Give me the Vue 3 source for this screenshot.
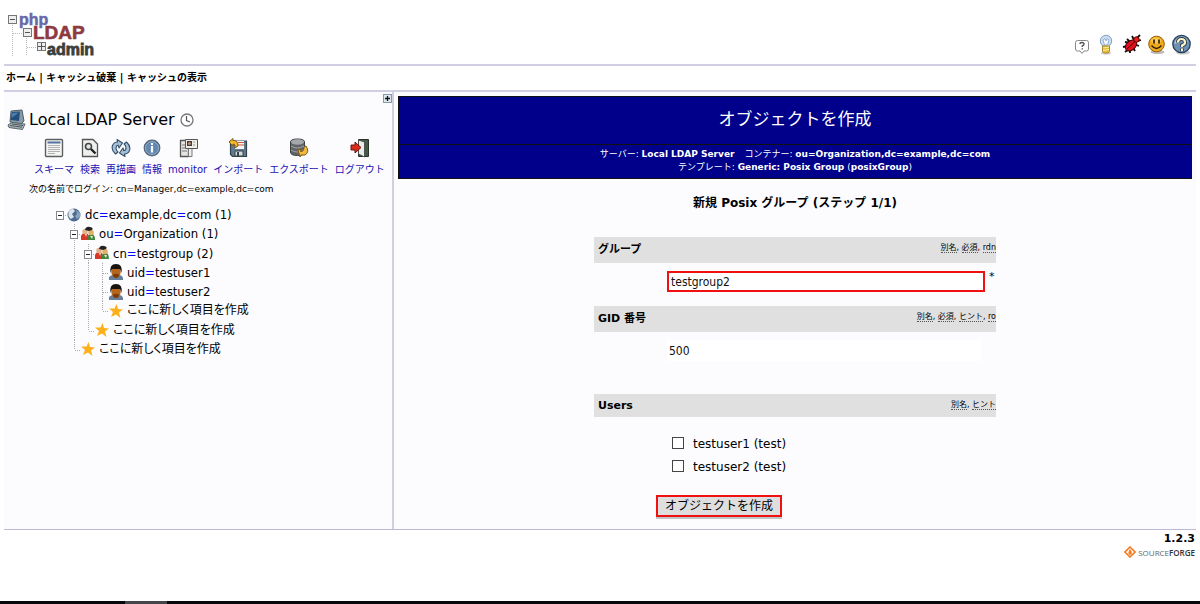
<script setup>
import { ref } from 'vue'

const group = ref('testgroup2')
const gid = ref('500')
const menu = ['ホーム', 'キャッシュ破棄', 'キャッシュの表示']
const tools = [
  { id: 'schema', label: 'スキーマ' },
  { id: 'search', label: '検索' },
  { id: 'refresh', label: '再描画' },
  { id: 'info', label: '情報' },
  { id: 'monitor', label: 'monitor' },
  { id: 'import', label: 'インポート' },
  { id: 'export', label: 'エクスポート' },
  { id: 'logout', label: 'ログアウト' },
]
const tree = [
  { cells: ['root'], icon: 'globe', parts: ['dc', '=', 'example', ',', 'dc', '=', 'com (1)'] },
  { cells: ['none', 'open'], icon: 'people', parts: ['ou', '=', 'Organization (1)'] },
  { cells: ['none', 'line', 'open'], icon: 'people', parts: ['cn', '=', 'testgroup (2)'] },
  { cells: ['none', 'line', 'line', 'branch'], icon: 'user', parts: ['uid', '=', 'testuser1'] },
  { cells: ['none', 'line', 'line', 'branch'], icon: 'user', parts: ['uid', '=', 'testuser2'] },
  { cells: ['none', 'line', 'line', 'corner'], icon: 'star', parts: ['ここに新しく項目を作成'] },
  { cells: ['none', 'line', 'corner'], icon: 'star', parts: ['ここに新しく項目を作成'] },
  { cells: ['none', 'corner'], icon: 'star', parts: ['ここに新しく項目を作成'] },
]
const users = ref([
  { name: 'testuser1', on: false },
  { name: 'testuser2', on: false },
])
const partClass = (p) => (p === '=' ? 'eq' : p === ',' ? 'comma' : '')
</script>

<template>
  <div class="page">
    <header class="top">
      <a href="#" class="logo" aria-label="phpLDAPadmin">
        <svg width="94" height="52" viewBox="0 0 94 52">
          <g stroke="#bbb" stroke-dasharray="1 1" fill="none">
            <path d="M6.500 14V47M7 24.500H16M20.500 27V47M21 38.500H30" />
          </g>
          <g fill="#eee" stroke="#777">
            <rect x="2.500" y="6.500" width="8" height="8" />
            <rect x="17.500" y="19.500" width="8" height="8" />
            <rect x="31.500" y="33.500" width="8" height="8" />
          </g>
          <path d="M4 10.500H9M19 23.500H24M32 37.500H39M35.500 34V41" stroke="#555" />
          <g font-family="Liberation Sans, sans-serif" font-weight="bold">
            <text x="13" y="16" font-size="16" fill="#6668a8" stroke="#6668a8" stroke-width=".5">php</text>
            <text x="27" y="30" font-size="19" fill="#8e3a3f" stroke="#8e3a3f" stroke-width=".6">LDAP</text>
            <text x="41" y="46" font-size="16" fill="#3c3f3c" stroke="#3c3f3c" stroke-width=".8">admin</text>
          </g>
        </svg>
      </a>
      <nav class="links" aria-label="リンク">
        <a href="#" aria-label="hint">
          <svg width="20" height="22" viewBox="0 0 20 22">
            <path d="M5.500 7.500H14.500Q16.500 7.500 16.500 9.500V16Q16.500 18 14.500 18H12L10 20.500L8 18H5.500Q3.500 18 3.500 16V9.500Q3.500 7.500 5.500 7.500Z" fill="#fff" stroke="#888" />
            <path d="M8 11Q8 9.500 10 9.500T12 11.300Q12 12.300 10.300 13V14M10.300 15.200V16.500" fill="none" stroke="#555" stroke-width="1.400" />
          </svg>
        </a>
        <a href="#" aria-label="request">
          <svg width="20" height="22" viewBox="0 0 20 22">
            <ellipse cx="9" cy="20" rx="5" ry="1.500" fill="#ccc" />
            <circle cx="9" cy="8" r="5.700" fill="#cfe0f5" stroke="#7f9fc7" />
            <path d="M6 7L8 5.500L9 8L10 5.500L12 7L10.500 12H7.500Z" fill="#f8fbff" stroke="#93afd0" />
            <path d="M5.500 13H12.500V18.500L11 20H7L5.500 18.500Z" fill="#e7bd3b" stroke="#a9862c" />
            <path d="M6 15L12 14M6 17.500L12 16.500" stroke="#fff0a0" />
          </svg>
        </a>
        <a href="#" aria-label="bug">
          <svg width="20" height="22" viewBox="0 0 20 22">
            <path d="M3 9L8 10M1 14L6 13M3 19L7 16M8 20V15M13 18L10 13M17 13L12 11M10 3L12 7M15 5L18 2M16 8L19 7M5 6L8 9" stroke="#111" stroke-width="1.800" fill="none" />
            <ellipse cx="9" cy="12.500" rx="6.500" ry="4.500" transform="rotate(-42 9 12.500)" fill="#e00f1e" stroke="#400" />
            <circle cx="14.500" cy="6.500" r="2.700" fill="#e22" stroke="#500" />
            <path d="M5 16L13 8.500" stroke="#500" />
          </svg>
        </a>
        <a href="#" aria-label="donate">
          <svg width="20" height="22" viewBox="0 0 20 22">
            <ellipse cx="10.500" cy="19" rx="7" ry="2" fill="#bbb" />
            <circle cx="9.500" cy="11" r="7.800" fill="#eea91c" stroke="#9a5e08" />
            <ellipse cx="9" cy="7.500" rx="5" ry="3" fill="#f9ca50" />
            <path d="M7 6.500V10.500M12 6.500V10.500" stroke="#312008" stroke-width="1.700" />
            <path d="M4.500 12.500Q9.500 18.500 14.500 12.500" fill="none" stroke="#312008" stroke-width="1.300" />
          </svg>
        </a>
        <a href="#" aria-label="help">
          <svg width="20" height="22" viewBox="0 0 20 22">
            <ellipse cx="11" cy="19.500" rx="7" ry="2" fill="#ccc" />
            <circle cx="9.500" cy="11" r="8.700" fill="#6d90b2" stroke="#233e58" stroke-width="1.300" />
            <path d="M2.500 10Q4 4 10 3.500Q15 4 16 9Q10 7 2.500 11Z" fill="#b5cadb" />
            <path d="M6 9.500Q6 6 9.500 6T13 9.500Q13 11.500 10 12.500V14M10 15.500V18" fill="none" stroke="#25364a" stroke-width="4" />
            <path d="M6 9.500Q6 6 9.500 6T13 9.500Q13 11.500 10 12.500V14M10 15.500V18" fill="none" stroke="#fff4c5" stroke-width="2.200" />
          </svg>
        </a>
      </nav>
    </header>

    <nav class="menu" aria-label="メニュー">
      <template v-for="(m, i) in menu" :key="m"><span v-if="i"> | </span><a href="#">{{ m }}</a></template>
    </nav>

    <div class="body">
      <aside class="side">
        <button class="expand" type="button" aria-label="展開">
          <svg width="9" height="9" viewBox="0 0 9 9"><rect x=".5" y=".5" width="8" height="8" fill="#dde8ee" stroke="#8799a3" /><path d="M2 4.500H7M4.500 2V7" stroke="#111" stroke-width="1.300" /></svg>
        </button>
        <h1 class="server">
          <svg width="20" height="22" viewBox="0 0 20 22">
            <path d="M4 2L15 1L17 12L14 15L3 13Z" fill="#899ba5" stroke="#4f5e67" />
            <path d="M5 3L13 2.500L12 12L3.500 11Z" fill="#224d7c" />
            <path d="M5.500 4L12 3.500L4.500 9Z" fill="#4c80ad" />
            <path d="M1 16L5 13.500L18 15L15.500 20.500L2 18.500Z" fill="#a9b3b7" stroke="#59666d" />
            <path d="M3 16.500L15 18.200M5 15L16 16.500" stroke="#4c5960" />
          </svg>
          <span>Local LDAP Server</span>
          <svg class="clock" width="14" height="14" viewBox="0 0 14 14"><circle cx="7" cy="7" r="6" fill="#fff" stroke="#777" stroke-width="1.300" /><path d="M6.500 3V7.500L10 9" fill="none" stroke="#555" stroke-width="1.200" /></svg>
        </h1>

        <nav class="tools" aria-label="サーバー操作">
          <a v-for="t in tools" :key="t.id" href="#">
            <svg width="20" height="22" viewBox="1 0 20 22">
              <g v-if="t.id === 'schema'">
                <rect x="2.500" y="2.500" width="17" height="17" rx="1" fill="#f4f4f2" stroke="#5c6060" stroke-width="1.400" />
                <path d="M4.500 5.500H17.500" stroke="#5271a1" stroke-width="2" /><path d="M5 8.500H17M5 10.500H17M5 12.500H17M5 14.500H17M5 16.500H12" stroke="#b2b2b2" />
              </g>
              <g v-else-if="t.id === 'search'">
                <path d="M3.500 2.500H14L18.500 7V19.500H3.500Z" fill="#efefed" stroke="#555" stroke-width="1.300" />
                <circle cx="9.500" cy="9.500" r="3" fill="#dde5ea" stroke="#444" stroke-width="1.600" /><path d="M12 12L16.500 16.500" stroke="#222" stroke-width="2.400" />
              </g>
              <g v-else-if="t.id === 'refresh'" fill="#a5c1da" stroke="#344d66" stroke-width="1.100" stroke-linejoin="round">
                <path d="M5.500 17Q1 13 2.500 8.500Q4 5 7.500 5L7 2.500L12.500 6L9 11L8.300 8.300Q6 8.500 6 11Q6 13.500 8 15Z" />
                <path d="M16.500 5Q21 9 19.500 13.500Q18 17 14.500 17L15 19.500L9.500 16L13 11L13.700 13.700Q16 13.500 16 11Q16 8.500 14 7Z" />
              </g>
              <g v-else-if="t.id === 'info'">
                <circle cx="11" cy="11" r="7.800" fill="#6387b0" stroke="#567" stroke-width="1.200" /><circle cx="11" cy="11" r="6.500" fill="none" stroke="#90abc8" />
                <path d="M11 9V15.500M11 6V8" stroke="#fff" stroke-width="2.200" fill="none" />
              </g>
              <g v-else-if="t.id === 'monitor'">
                <path d="M3.500 3.500H11.500V19.500H3.500Z" fill="#e4e4e0" stroke="#555" stroke-width="1.300" /><path d="M5 8H8M5 11H8M5 14H10" stroke="#777" />
                <path d="M8.500 2.500H20.500V11.500H8.500Z" fill="#f1eee8" stroke="#555" /><rect x="10" y="4" width="5" height="5" fill="#343e4c" /><circle cx="12.500" cy="6.500" r="1.500" fill="#c88b64" /><path d="M16 5H18M16 8H18" stroke="#999" /><path d="M11.500 12V19.500H15V12" fill="#eee" stroke="#777" />
              </g>
              <g v-else-if="t.id === 'import'">
                <path d="M4 4H19.500V19.500H5.500L3.500 17.500V4Z" fill="#60798e" stroke="#34434e" stroke-width="1.200" /><rect x="8" y="4" width="9" height="8" fill="#f5f5f5" /><path d="M11 5.500H17M11 8H17" stroke="#d4552a" /><path d="M8 19V14H16V19Z" fill="#d5dadc" stroke="#344" /><rect x="10" y="15" width="2" height="4" fill="#344" />
                <path d="M2 5L6 1.500V3.500Q11 3 11 9L8 11Q9 7 6 7V9Z" fill="#f1b72d" stroke="#7d5814" />
              </g>
              <g v-else-if="t.id === 'export'">
                <path d="M2.500 5Q2.500 2 9.500 2T16.500 5V15Q16.500 18.500 9.500 18.500T2.500 15Z" fill="#606466" stroke="#3c4042" /><ellipse cx="9.500" cy="5" rx="6.500" ry="2.700" fill="#a4a8aa" /><path d="M3 9Q9 13 16 9M3 13Q9 17 16 13" fill="none" stroke="#a1a5a7" />
                <path d="M10 13L13 12L12.500 14.500Q16 15 16 10L18 9Q22 15 17 18L13 18L12 20Z" fill="#f2bb3e" stroke="#805a17" />
              </g>
              <g v-else>
                <path d="M9.500 2.500H19.500V19.500H9.500Z" fill="#465943" stroke="#293428" /><path d="M9.500 3L15.500 5V20L9.500 17Z" fill="#e8eceb" stroke="#4d5654" /><path d="M2 8H6V5L12 10.500L6 16V13H2Z" fill="#d92d1b" stroke="#70150e" />
              </g>
            </svg>
            <span>{{ t.label }}</span>
          </a>
        </nav>

        <p class="login">次の名前でログイン: cn=Manager,dc=example,dc=com</p>

        <ul class="tree">
          <li v-for="(row, r) in tree" :key="r">
            <template v-for="(c, i) in row.cells" :key="i">
              <component :is="c === 'open' || c === 'root' ? 'button' : 'span'" class="cell" :aria-label="c === 'open' || c === 'root' ? '折りたたむ' : null">
                <svg width="14" height="19" viewBox="0 0 14 19">
                  <g stroke="#aaa" stroke-dasharray="1 1">
                    <path v-if="c === 'line' || c === 'branch'" d="M7.500 0V19" />
                    <path v-if="c === 'open'" d="M7.500 0V19" />
                    <path v-if="c === 'corner'" d="M7.500 0V10" />
                    <path v-if="c !== 'none' && c !== 'line'" d="M8 10.500H14" />
                  </g>
                  <template v-if="c === 'open' || c === 'root'"><rect x="3.500" y="6.500" width="7" height="8" fill="#fff" stroke="#888" /><path d="M5 10.500H9" stroke="#222" /></template>
                </svg>
              </component>
            </template>
            <svg class="node" width="14" height="16" viewBox="0 0 14 16">
              <g v-if="row.icon === 'globe'"><circle cx="7" cy="8" r="6.500" fill="#4d6b91" /><path d="M2 4Q6 0 8 4L5 7L7 10L4 12Q0 9 2 4Z" fill="#dce5ec" /><path d="M9 3L13 6V10L10 12L8 9L10 7Z" fill="#88a2bf" /></g>
              <g v-else-if="row.icon === 'people'"><path d="M0 14V10Q1 7 4 7T8 10V14Z" fill="#d53a27" /><path d="M7 14V10Q9 7 12 8Q14 10 14 14Z" fill="#3f873e" /><circle cx="4" cy="5.500" r="2.700" fill="#e1b28c" /><circle cx="10" cy="6.500" r="2.800" fill="#dfb267" /><path d="M4 4Q5 0 9 1T11 4L8 5Z" fill="#222" /><path d="M4 8L5 11L6 8M9 10L11 13L12 10Z" fill="#f0dfc2" /></g>
              <g v-else-if="row.icon === 'user'"><path d="M0 16V13Q2 11 4 11H10Q13 11 14 14V16Z" fill="#667f9c" /><ellipse cx="7" cy="8" rx="4.700" ry="6" fill="#b5651e" /><path d="M1.500 9Q0 0 7 0T12.500 9L11 5H3Z" fill="#171310" /><path d="M4 10.500Q7 9 10 10.500Q10 14 7 14T4 10.500Z" fill="#7a3c0f" /></g>
              <path v-else d="M7.500 1L9 6L14 6.500L10 9.500L11.500 15L7 11.500L2 14L4 9L0 5.500L5.500 5.500Z" fill="#fbb01c" />
            </svg>
            <a href="#" :class="{ fresh: row.icon === 'star' }"><span v-for="(p, i) in row.parts" :key="i" :class="partClass(p)">{{ p }}</span></a>
          </li>
        </ul>
      </aside>

      <main class="main">
        <h2 class="title">オブジェクトを作成</h2>
        <div class="sub">
          <div>サーバー: <b>Local LDAP Server</b><span class="sep"></span>コンテナー: <b>ou=Organization,dc=example,dc=com</b></div>
          <div>テンプレート: <b>Generic: Posix Group</b> (<b>posixGroup</b>)</div>
        </div>
        <h3 class="step">新規 Posix グループ (ステップ 1/1)</h3>
        <form class="form" @submit.prevent>
          <div class="bar"><label for="cn">グループ</label><small><abbr>別名</abbr>, <abbr>必須</abbr>, <abbr>rdn</abbr></small></div>
          <div class="field"><input id="cn" v-model="group" class="text marked" type="text"><span class="star">*</span></div>
          <div class="bar"><label for="gid">GID 番号</label><small><abbr>別名</abbr>, <abbr>必須</abbr>, <abbr>ヒント</abbr>, <abbr>ro</abbr></small></div>
          <div class="field gid"><input id="gid" v-model="gid" class="text" type="text" readonly></div>
          <div class="bar short"><span>Users</span><small><abbr>別名</abbr>, <abbr>ヒント</abbr></small></div>
          <div class="checks">
            <label v-for="u in users" :key="u.name"><input v-model="u.on" type="checkbox"><span>{{ u.name }} (test)</span></label>
          </div>
          <button class="create" type="submit">オブジェクトを作成</button>
        </form>
      </main>
    </div>

    <footer class="foot">
      <b>1.2.3</b>
      <a href="#" class="sf">
        <svg width="12" height="12" viewBox="0 0 12 12"><path d="M6 1L11 6L6 11L1 6Z" fill="#fff" stroke="#f47b20" stroke-width="1.600" /><path d="M6 3Q8.500 6 7.500 8L6 9L4.500 8Q4 6 6 3Z" fill="#f47b20" /></svg>
        <span>SOURCE<b>FORGE</b></span>
      </a>
    </footer>
    <div class="taskbar"><span></span></div>
  </div>
</template>

<style>
body { margin: 0; background: #fff; }
</style>

<style scoped>
* { box-sizing: border-box; }
.page {
  display: flex; flex-direction: column; min-height: 100vh;
  font-family: "DejaVu Sans", "Noto Sans CJK JP", sans-serif;
  font-size: 12px; color: #000;
}
a { color: inherit; text-decoration: none; }
button { font: inherit; padding: 0; border: 0; background: none; cursor: pointer; }
svg { display: block; flex: none; }
h1, h2, h3, p, ul { margin: 0; padding: 0; font-weight: normal; }

.top { display: flex; justify-content: space-between; align-items: flex-end; height: 66px; margin: 0 4px; padding: 0 4px 3px 2px; border-bottom: 2px solid #d0cfe4; }
.links { display: flex; gap: 5px; padding-bottom: 6px; }
.menu { height: 26px; margin: 0 4px; padding-left: 2px; border-bottom: 2px solid #d0cfe4; font-size: 10px; font-weight: bold; line-height: 23px; white-space: pre; }

.body { display: flex; height: 438px; margin: 0 4px; border-bottom: 1px solid #bcb9d6; background: #fcfcfe; }
.side { position: relative; flex: none; width: 390px; border-right: 2px solid #d0cfe4; }
.expand { position: absolute; top: 2px; right: 0; }
.server { display: flex; align-items: center; gap: 2px; padding: 17px 0 0 3px; font-size: 16px; line-height: 22px; }
.clock { margin-left: 3px; }
.tools { display: flex; gap: 6px; padding: 6px 0 0 30px; color: #1a12b0; font-size: 10px; line-height: 20px; white-space: nowrap; }
.tools a { display: flex; flex-direction: column; align-items: center; gap: 1px; }
.login { padding: 1px 0 0 25px; font-size: 9px; line-height: 16px; white-space: nowrap; }
.tree { display: grid; grid-auto-rows: 1fr; min-height: 154px; padding: 0 0 0 49px; margin-top: 8px; list-style: none; font: 13px "DejaVu Sans Condensed", "DejaVu Sans", "Noto Sans CJK JP", sans-serif; line-height: 19px; white-space: nowrap; }
.tree li { display: flex; align-items: center; }
.fresh { font-size: 12px; font-feature-settings: "palt"; }
.cell { width: 14px; height: 19px; }
.node { margin-right: 4px; }
.eq { color: #00f; }
.comma { color: #f00; }

.main { flex: 1; padding: 4px 4px 0 4px; }
.title { height: 49px; border: 1px solid #111; background: #00008b; color: #fff; font-size: 17px; line-height: 44px; text-align: center; }
.sub { height: 34px; padding-top: 3px; border: 1px solid #111; border-top: 0; background: #00008b; color: #fff; font-size: 9px; line-height: 13px; text-align: center; }
.sep { display: inline-block; width: 10px; }
.step { padding-top: 14px; font-size: 12px; font-weight: bold; line-height: 20px; text-align: center; }
.form { width: 402px; margin: 24px auto 0; }
.bar { display: flex; justify-content: space-between; height: 26px; padding-left: 4px; background: #e0e0e0; font-size: 11px; font-weight: bold; line-height: 25px; }
.bar small { font-size: 8px; font-weight: normal; line-height: 22px; }
abbr { border-bottom: 1px dotted #555; text-decoration: none; }
.field { display: flex; height: 43px; padding: 8px 0 0 73px; }
.text { width: 318px; height: 21px; padding: 0 2px; border: 0; background: #fff; font: 12px "DejaVu Sans Condensed", "DejaVu Sans", sans-serif; color: #111; outline: none; }
.marked { border: 2px solid #f01010; }
.star { margin-left: 4px; font-size: 11px; line-height: 12px; }
.gid { height: 62px; }
.gid .text { width: 314px; }
.short { height: 23px; line-height: 23px; }
.checks { display: flex; flex-direction: column; padding: 15px 0 0 78px; }
.checks label { display: flex; gap: 9px; height: 23px; line-height: 24px; }
.checks input { appearance: none; width: 12px; height: 12px; margin: 5px 0 0; border: 1px solid #444; background: #fff; }
.create { display: block; width: 126px; height: 22px; margin: 17px 0 0 62px; border: 2px solid #f01010; background: #dedede; box-shadow: 0 2px #c0c4c4; font-size: 12px; line-height: 18px; }

.foot { display: flex; flex: 1; flex-direction: column; align-items: flex-end; padding: 1px 5px 0; font-size: 11px; line-height: 15px; }
.sf { display: flex; align-items: center; gap: 2px; font: 8px "Open Sans", sans-serif; color: #666; }
.sf b { color: #333; font-weight: 600; }
.taskbar { height: 3px; background: #06070c; }
.taskbar span { display: block; width: 42px; height: 3px; margin-left: 125px; background: #44464c; }
</style>
